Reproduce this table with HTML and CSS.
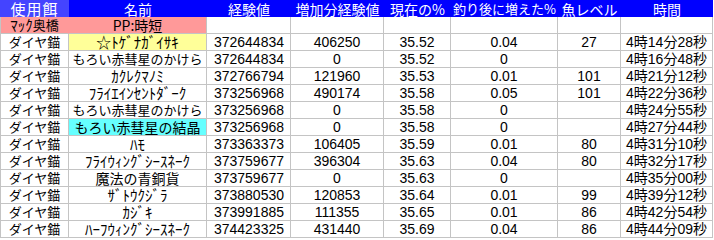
FILE: index.html
```html
<!DOCTYPE html>
<html lang="ja">
<head>
<meta charset="utf-8">
<title>釣り記録</title>
<link rel="stylesheet" href="styles.css">
</head>
<body>
<div class="sheet">
  <div class="row head">
    <div class="c h h-first">使用餌</div>
    <div class="c h">名前</div>
    <div class="c h">経験値</div>
    <div class="c h">増加分経験値</div>
    <div class="c h">現在の%</div>
    <div class="c h h-small">釣り後に増えた%</div>
    <div class="c h">魚レベル</div>
    <div class="c h">時間</div>
  </div>
  <div class="row">
    <div class="c jp pink pink-join half">ﾏｯｸ<span class="full">奥橋</span></div>
    <div class="c pink pp">PP:時短</div>
    <div class="c"></div><div class="c"></div><div class="c"></div><div class="c"></div><div class="c"></div><div class="c"></div>
  </div>
  <div class="row">
    <div class="c jp">ダイヤ錨</div>
    <div class="c jp yellow half">☆ﾄｹﾞﾅｶﾞｲｻｷ</div>
    <div class="c num">372644834</div><div class="c">406250</div><div class="c">35.52</div><div class="c">0.04</div><div class="c">27</div><div class="c">4時14分28秒</div>
  </div>
  <div class="row">
    <div class="c jp">ダイヤ錨</div>
    <div class="c jp">もろい赤彗星のかけら</div>
    <div class="c num">372644834</div><div class="c">0</div><div class="c">35.52</div><div class="c">0</div><div class="c"></div><div class="c">4時16分48秒</div>
  </div>
  <div class="row">
    <div class="c jp">ダイヤ錨</div>
    <div class="c jp half">ｶｸﾚｸﾏﾉﾐ</div>
    <div class="c num">372766794</div><div class="c">121960</div><div class="c">35.53</div><div class="c">0.01</div><div class="c">101</div><div class="c">4時21分12秒</div>
  </div>
  <div class="row">
    <div class="c jp">ダイヤ錨</div>
    <div class="c jp half">ﾌﾗｲｴｲﾝｾﾝﾄﾀﾞｰｸ</div>
    <div class="c num">373256968</div><div class="c">490174</div><div class="c">35.58</div><div class="c">0.05</div><div class="c">101</div><div class="c">4時22分36秒</div>
  </div>
  <div class="row">
    <div class="c jp">ダイヤ錨</div>
    <div class="c jp">もろい赤彗星のかけら</div>
    <div class="c num">373256968</div><div class="c">0</div><div class="c">35.58</div><div class="c">0</div><div class="c"></div><div class="c">4時24分55秒</div>
  </div>
  <div class="row">
    <div class="c jp">ダイヤ錨</div>
    <div class="c jp cyan big">もろい赤彗星の結晶</div>
    <div class="c num">373256968</div><div class="c">0</div><div class="c">35.58</div><div class="c">0</div><div class="c"></div><div class="c">4時27分44秒</div>
  </div>
  <div class="row">
    <div class="c jp">ダイヤ錨</div>
    <div class="c jp half">ﾊﾓ</div>
    <div class="c num">373363373</div><div class="c">106405</div><div class="c">35.59</div><div class="c">0.01</div><div class="c">80</div><div class="c">4時31分10秒</div>
  </div>
  <div class="row">
    <div class="c jp">ダイヤ錨</div>
    <div class="c jp half">ﾌﾗｲｳｨﾝｸﾞｼｰｽﾈｰｸ</div>
    <div class="c num">373759677</div><div class="c">396304</div><div class="c">35.63</div><div class="c">0.04</div><div class="c">80</div><div class="c">4時32分17秒</div>
  </div>
  <div class="row">
    <div class="c jp">ダイヤ錨</div>
    <div class="c jp big">魔法の青銅貨</div>
    <div class="c num">373759677</div><div class="c">0</div><div class="c">35.63</div><div class="c">0</div><div class="c"></div><div class="c">4時35分00秒</div>
  </div>
  <div class="row">
    <div class="c jp">ダイヤ錨</div>
    <div class="c jp half">ｻﾞﾄｳｸｼﾞﾗ</div>
    <div class="c num">373880530</div><div class="c">120853</div><div class="c">35.64</div><div class="c">0.01</div><div class="c">99</div><div class="c">4時39分12秒</div>
  </div>
  <div class="row">
    <div class="c jp">ダイヤ錨</div>
    <div class="c jp half">ｶｼﾞｷ</div>
    <div class="c num">373991885</div><div class="c">111355</div><div class="c">35.65</div><div class="c">0.01</div><div class="c">86</div><div class="c">4時42分54秒</div>
  </div>
  <div class="row">
    <div class="c jp">ダイヤ錨</div>
    <div class="c jp half">ﾊｰﾌｳｨﾝｸﾞｼｰｽﾈｰｸ</div>
    <div class="c num">374423325</div><div class="c">431440</div><div class="c">35.69</div><div class="c">0.04</div><div class="c">86</div><div class="c">4時44分09秒</div>
  </div>
</div>
</body>
</html>
```

FILE: styles.css
```css
html, body {
  margin: 0;
  padding: 0;
  background: #ffffff;
}

body {
  font-family: "Liberation Sans", "Noto Sans CJK JP", sans-serif;
  font-size: 14px;
  color: #000000;
}

.sheet {
  width: 713px;
  display: flex;
  flex-direction: column;
}

.row {
  display: grid;
  grid-template-columns: 69px 138px 84px 93px 67px 107px 63px 92px;
  height: 17px;
}

.c {
  box-sizing: border-box;
  border-right: 1px solid #c4c4c4;
  border-bottom: 1px solid #c4c4c4;
  display: flex;
  align-items: center;
  justify-content: center;
  white-space: nowrap;
  line-height: 16px;
}

.row > .c:first-child {
  border-left: 1px solid #c4c4c4;
}

.h {
  background: #0000ff;
  color: #ffffff;
  border: none;
  font-family: "Noto Sans CJK JP", "Liberation Sans", sans-serif;
  font-size: 14px;
}

.row > .h:first-child {
  border-left: none;
}

.h-first {
  background: #4444ff;
  font-size: 15px;
  letter-spacing: 1px;
}

.h-small {
  font-size: 13px;
}

.jp {
  font-family: "Noto Sans CJK JP", sans-serif;
  font-size: 13px;
}

.half {
  font-size: 15px;
}

.half .full {
  font-size: 13px;
}

.big {
  font-size: 14px;
}

.num {
  justify-content: flex-end;
  padding-right: 6px;
}

.pink {
  background: #ff9999;
}

.pink-join {
  border-right-color: #ff9999;
}

.pp {
  font-family: "Noto Sans CJK JP", sans-serif;
  font-size: 14px;
}

.yellow {
  background: #ffff99;
}

.cyan {
  background: #66ffff;
}
```
